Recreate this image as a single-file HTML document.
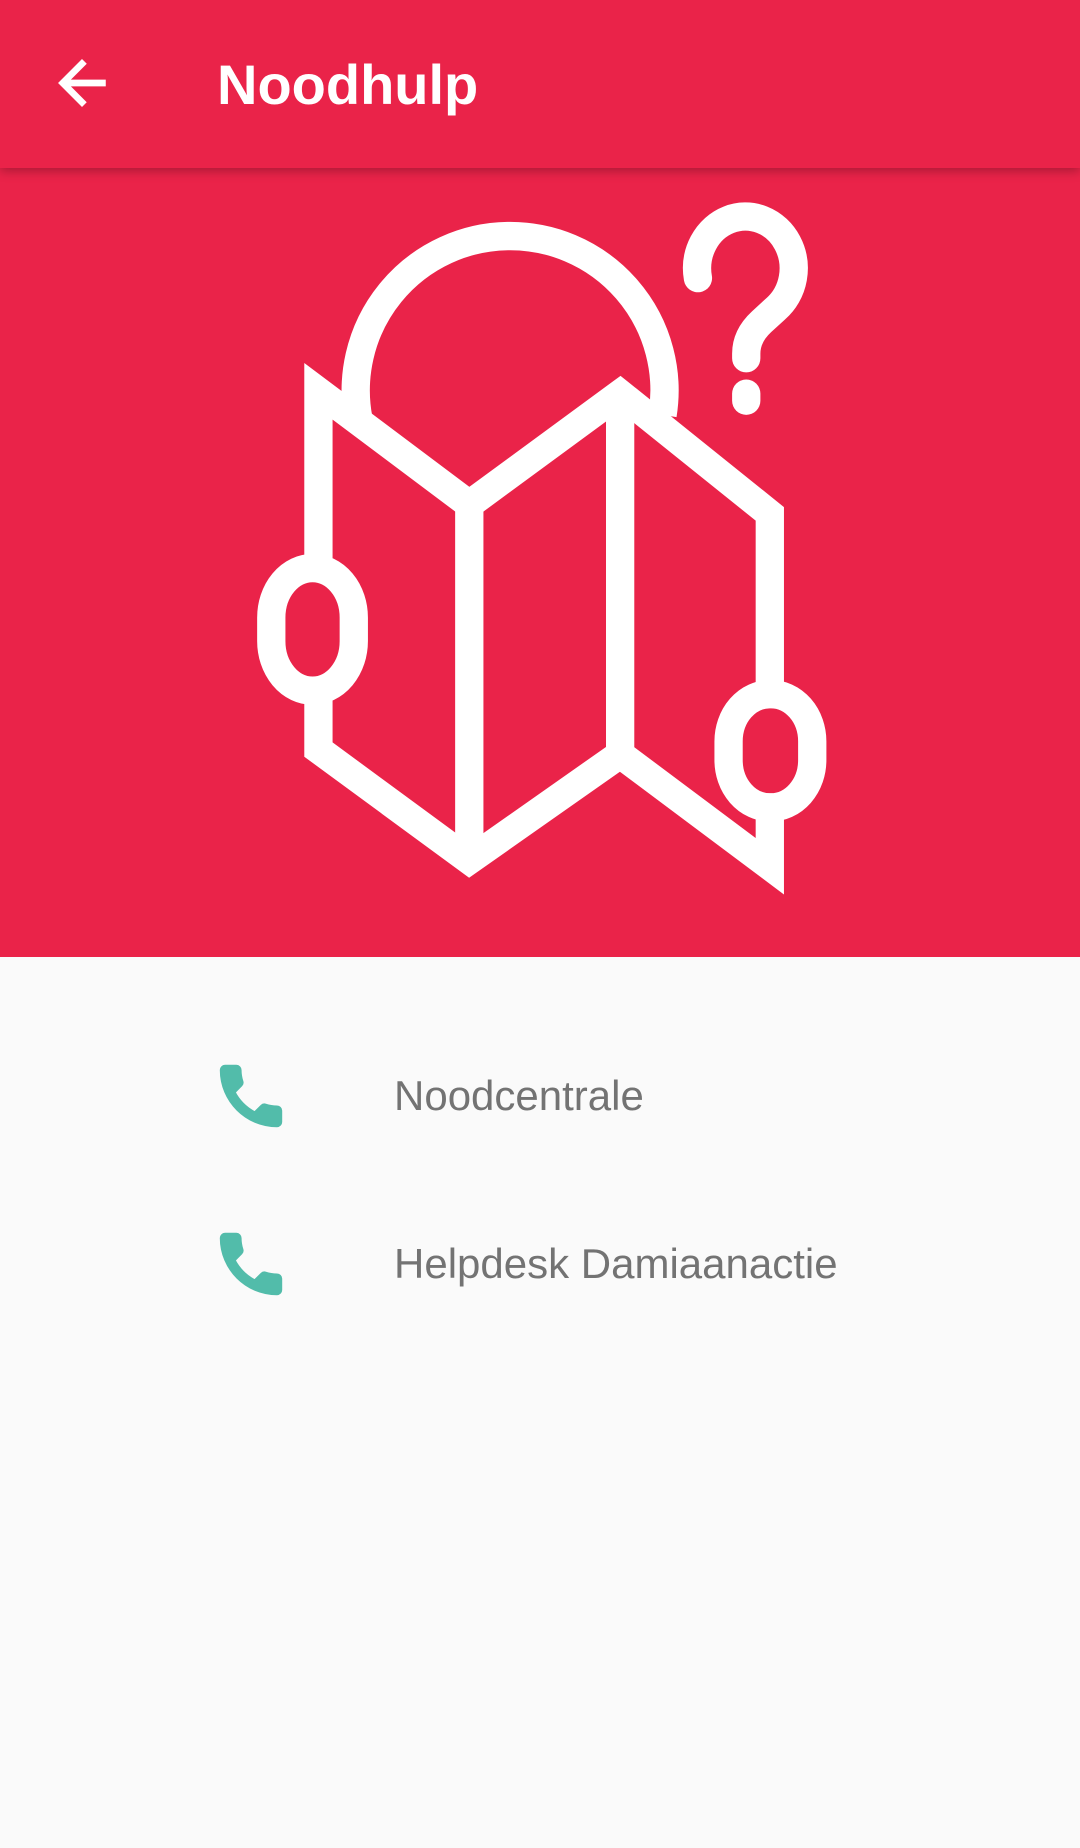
<!DOCTYPE html>
<html><head><meta charset="utf-8"><style>
html,body{margin:0;padding:0;}
body{width:1080px;height:1848px;background:#fafafa;position:relative;overflow:hidden;font-family:"Liberation Sans",sans-serif;}
.hero{position:absolute;left:0;top:0;width:1080px;height:957px;background:#ea2349;}
.bar{position:absolute;left:0;top:0;width:1080px;height:168px;background:#ea2349;box-shadow:0 3px 10px rgba(0,0,0,0.28);z-index:2;}
.title{position:absolute;left:217px;top:50px;font-size:56px;font-weight:bold;color:#fff;line-height:70px;}
.row{position:absolute;left:394px;font-size:42px;color:#737373;line-height:50px;}
.ph{position:absolute;left:212px;width:78px;height:78px;}
</style></head><body>
<div class="hero">
<svg width="1080" height="957" viewBox="0 0 916 812" style="position:absolute;left:0;top:0">
<g fill="none" stroke="#fff" stroke-width="24">
<path d="M304 356 A131 131 0 1 1 562 352"/>
<path d="M270 482 L270 332 L398 428 L526 334 L653 436 L653 588"/>
<path d="M653 686 L653 735 L526 640 L398 730 L270 636 L270 588"/>
<path d="M398 428 L398 730"/>
<path d="M526 334 L526 640"/>
<rect x="230" y="482" width="70" height="104" rx="35" ry="42"/>
<rect x="618" y="589" width="71" height="96" rx="35" ry="40"/>
<path stroke-linecap="round" stroke-linejoin="round" d="M592 236 A41 44 0 1 1 658 262 L646 273 Q633 285 633 300 L633 304"/>
<path stroke-linecap="round" d="M633 334 L633 340"/>
</g>
</svg>
</div>
<div class="bar">
<svg width="70" height="70" viewBox="0 0 24 24" style="position:absolute;left:47px;top:48px"><path fill="#fff" stroke="#fff" stroke-width="0.3" d="M20 11H7.83l5.59-5.59L12 4l-8 8 8 8 1.41-1.41L7.83 13H20v-2z"/></svg>
<div class="title">Noodhulp</div>
</div>
<svg class="ph" style="top:1057px" viewBox="0 0 24 24"><path fill="#52bcaa" stroke="#52bcaa" stroke-width="1.2" stroke-linejoin="round" d="M6.62 10.79c1.44 2.83 3.76 5.14 6.59 6.59l2.2-2.2c.27-.27.67-.36 1.02-.24 1.12.37 2.33.57 3.57.57.55 0 1 .45 1 1V20c0 .55-.45 1-1 1-9.39 0-17-7.61-17-17 0-.55.45-1 1-1h3.5c.55 0 1 .45 1 1 0 1.25.2 2.45.57 3.57.11.35.03.74-.25 1.02l-2.2 2.2z"/></svg>
<div class="row" style="top:1071px">Noodcentrale</div>
<svg class="ph" style="top:1225px" viewBox="0 0 24 24"><path fill="#52bcaa" stroke="#52bcaa" stroke-width="1.2" stroke-linejoin="round" d="M6.62 10.79c1.44 2.83 3.76 5.14 6.59 6.59l2.2-2.2c.27-.27.67-.36 1.02-.24 1.12.37 2.33.57 3.57.57.55 0 1 .45 1 1V20c0 .55-.45 1-1 1-9.39 0-17-7.61-17-17 0-.55.45-1 1-1h3.5c.55 0 1 .45 1 1 0 1.25.2 2.45.57 3.57.11.35.03.74-.25 1.02l-2.2 2.2z"/></svg>
<div class="row" style="top:1239px">Helpdesk Damiaanactie</div>
</body></html>
